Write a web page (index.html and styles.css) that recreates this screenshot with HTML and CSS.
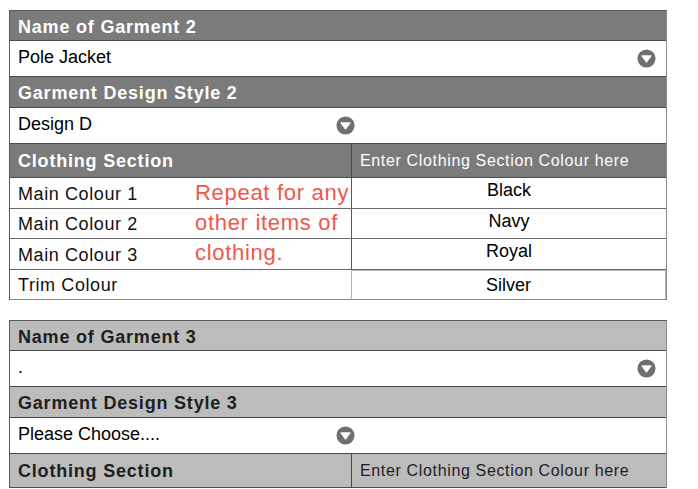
FILE: index.html
```html
<!DOCTYPE html>
<html>
<head>
<meta charset="utf-8">
<link rel="stylesheet" href="styles.css">
</head>
<body>
<div class="page">
  <section class="garment dark">
    <div class="head">Name of Garment 2</div>
    <div class="value">
      <span class="val-text">Pole Jacket</span>
      <svg class="arrow" viewBox="0 0 20 20" width="19" height="19"><circle cx="10" cy="10" r="9.5" fill="#6f6f6f"/><path d="M5 7.2 L15 7.2 L10 14 Z" fill="#fff" stroke="#fff" stroke-width="1" stroke-linejoin="round"/></svg>
    </div>
    <div class="head">Garment Design Style 2</div>
    <div class="value">
      <div class="select">
        <span class="val-text">Design D</span>
        <svg class="arrow" viewBox="0 0 20 20" width="19" height="19"><circle cx="10" cy="10" r="9.5" fill="#6f6f6f"/><path d="M5 7.2 L15 7.2 L10 14 Z" fill="#fff" stroke="#fff" stroke-width="1" stroke-linejoin="round"/></svg>
      </div>
    </div>
    <div class="section-head">
      <div class="sh-left">Clothing Section</div>
      <div class="sh-right">Enter Clothing Section Colour here</div>
    </div>
    <div class="crow r31"><div class="c-left">Main Colour 1</div><div class="c-right">Black</div></div>
    <div class="crow r30"><div class="c-left">Main Colour 2</div><div class="c-right">Navy</div></div>
    <div class="crow r31"><div class="c-left">Main Colour 3</div><div class="c-right">Royal</div></div>
    <div class="crow r30 last"><div class="c-left">Trim Colour</div><div class="c-right boxed">Silver</div></div>
    <p class="note">Repeat for any<br>other items of<br>clothing.</p>
  </section>

  <section class="garment light">
    <div class="head">Name of Garment 3</div>
    <div class="value">
      <span class="val-text">.</span>
      <svg class="arrow" viewBox="0 0 20 20" width="19" height="19"><circle cx="10" cy="10" r="9.5" fill="#6f6f6f"/><path d="M5 7.2 L15 7.2 L10 14 Z" fill="#fff" stroke="#fff" stroke-width="1" stroke-linejoin="round"/></svg>
    </div>
    <div class="head">Garment Design Style 3</div>
    <div class="value">
      <div class="select">
        <span class="val-text">Please Choose....</span>
        <svg class="arrow" viewBox="0 0 20 20" width="19" height="19"><circle cx="10" cy="10" r="9.5" fill="#6f6f6f"/><path d="M5 7.2 L15 7.2 L10 14 Z" fill="#fff" stroke="#fff" stroke-width="1" stroke-linejoin="round"/></svg>
      </div>
    </div>
    <div class="section-head">
      <div class="sh-left">Clothing Section</div>
      <div class="sh-right">Enter Clothing Section Colour here</div>
    </div>
  </section>
</div>
</body>
</html>
```
FILE: styles.css
```css
* { box-sizing: border-box; }
html, body { margin: 0; padding: 0; background: #fff; }
.page {
  padding: 10px 0 0 9px;
  font-family: "Liberation Sans", Arial, sans-serif;
}
.garment {
  position: relative;
  width: 658px;
  border: 1px solid #5a5a5a;
  border-bottom: none;
  border-right-color: #8a8a8a;
}
.garment + .garment { margin-top: 20px; }

.head {
  height: 30px;
  display: flex;
  align-items: center;
  padding: 3px 0 0 8px;
  font-weight: bold;
  font-size: 18px;
  letter-spacing: 0.8px;
  border-bottom: 1px solid #4a4a4a;
}
.head + .value + .head { height: 31px; }
.dark .head, .dark .section-head { background: #7b7b7b; color: #fff; }
.light .head, .light .section-head { background: #bcbcbc; color: #1e1e1e; }

.value {
  height: 36px;
  display: flex;
  align-items: center;
  justify-content: space-between;
  padding: 0 10px 0 8px;
  border-bottom: 1px solid #4a4a4a;
  background: #fff;
  color: #000;
  font-size: 18px;
}
.val-text { position: relative; top: -1px; }
.select {
  width: 337px;
  display: flex;
  align-items: center;
  justify-content: space-between;
}
.arrow { display: block; flex: none; }

.section-head {
  height: 34px;
  display: grid;
  grid-template-columns: 342px 1fr;
  border-bottom: 1px solid #4a4a4a;
}
.sh-left {
  display: flex;
  align-items: center;
  padding: 2px 0 0 8px;
  font-weight: bold;
  font-size: 18px;
  letter-spacing: 0.8px;
  border-right: 1px solid #4a4a4a;
}
.sh-right {
  display: flex;
  align-items: center;
  padding: 1px 0 0 8px;
  font-size: 16px;
  letter-spacing: 0.65px;
}

.crow {
  display: grid;
  grid-template-columns: 342px 1fr;
  border-bottom: 1px solid #6a6a6a;
  background: #fff;
}
.r31 { height: 31px; }
.r30 { height: 30px; }
.crow.last { border-bottom-color: #8a8a8a; }
.c-left {
  display: flex;
  align-items: center;
  padding: 2px 0 0 8px;
  font-size: 18px;
  letter-spacing: 0.6px;
  color: #111;
  border-right: 1px solid #5a5a5a;
}
.c-right {
  display: flex;
  align-items: center;
  justify-content: center;
  padding-bottom: 5px;
  font-size: 18px;
  color: #000;
}
.crow.last .c-left { border-right: none; }
.c-right.boxed {
  border: 1px solid #b5b5b5;
  border-bottom: none;
  margin-left: -1px;
  padding-bottom: 0;
}

.note {
  position: absolute;
  left: 185px;
  top: 167px;
  margin: 0;
  font-size: 22px;
  line-height: 30px;
  letter-spacing: 0.7px;
  color: #f2564a;
}
```
